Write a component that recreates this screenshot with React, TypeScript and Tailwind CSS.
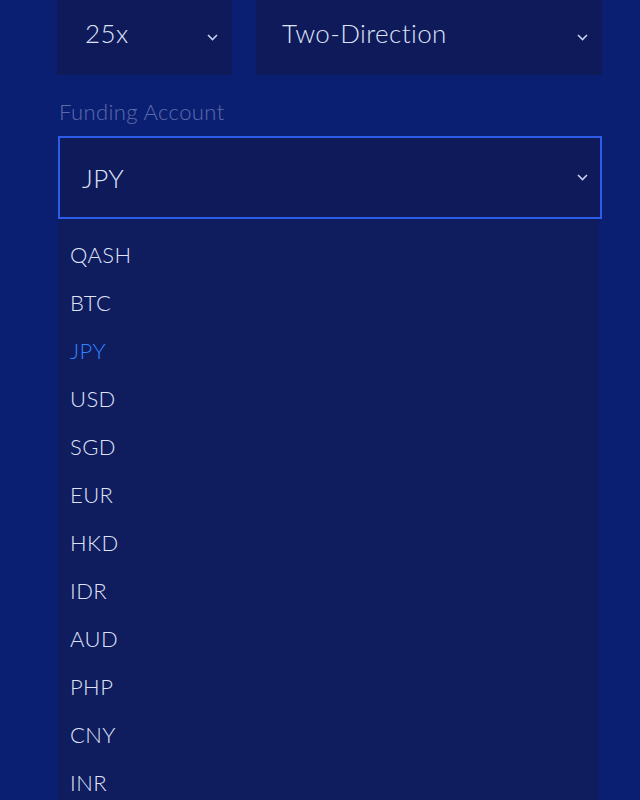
const currencies = ['QASH', 'BTC', 'JPY', 'USD', 'SGD', 'EUR', 'HKD', 'IDR', 'AUD', 'PHP', 'CNY', 'INR'];

function Chevron() {
  return (
    <svg width="11" height="7" viewBox="0 0 11 7" fill="none" className="shrink-0">
      <path d="M1 1l4.5 4.5L10 1" stroke="#c9d0ee" strokeWidth="1.6" />
    </svg>
  );
}

export default function App() {
  return (
    <div
      className="w-[640px] h-[800px] overflow-hidden bg-[#0b1f72] pl-[57px] pr-[38px] text-[#dfe3f7] font-light tracking-[0.4px]"
      style={{ fontFamily: 'Lato, "Open Sans", sans-serif' }}
    >
      <div className="flex gap-[24px]">
        <div className="w-[175px] h-[75px] bg-[#0e1a5a] flex items-center justify-between pl-[28px] pr-[14px]">
          <span className="text-[26px] leading-none -mt-[10px]">25x</span>
          <Chevron />
        </div>
        <div className="flex-1 h-[75px] bg-[#0e1a5a] flex items-center justify-between pl-[26px] pr-[14px]">
          <span className="text-[26px] leading-none -mt-[10px]">Two-Direction</span>
          <Chevron />
        </div>
      </div>

      <div className="mt-[25px] h-[24px] text-[22px] leading-[24px] text-[#5b6bab] pl-[2px]">Funding Account</div>

      <div className="mt-[12px] h-[83px] border-2 border-[#2c5ce8] bg-[#0e1a5a] flex items-center justify-between pl-[22px] pr-[12px] ml-[1px]">
        <span className="text-[26px] leading-none">JPY</span>
        <Chevron />
      </div>

      <div className="ml-[1px] mr-[3px] h-[600px] bg-[#0f1c5e] pt-[12px] pl-[12px]">
        {currencies.map((c) => (
          <div
            key={c}
            className={`h-[48px] flex items-center text-[22px] leading-none ${c === 'JPY' ? 'text-[#2f86ff]' : 'text-[#dfe3f7]'}`}
          >
            {c}
          </div>
        ))}
      </div>
    </div>
  );
}
